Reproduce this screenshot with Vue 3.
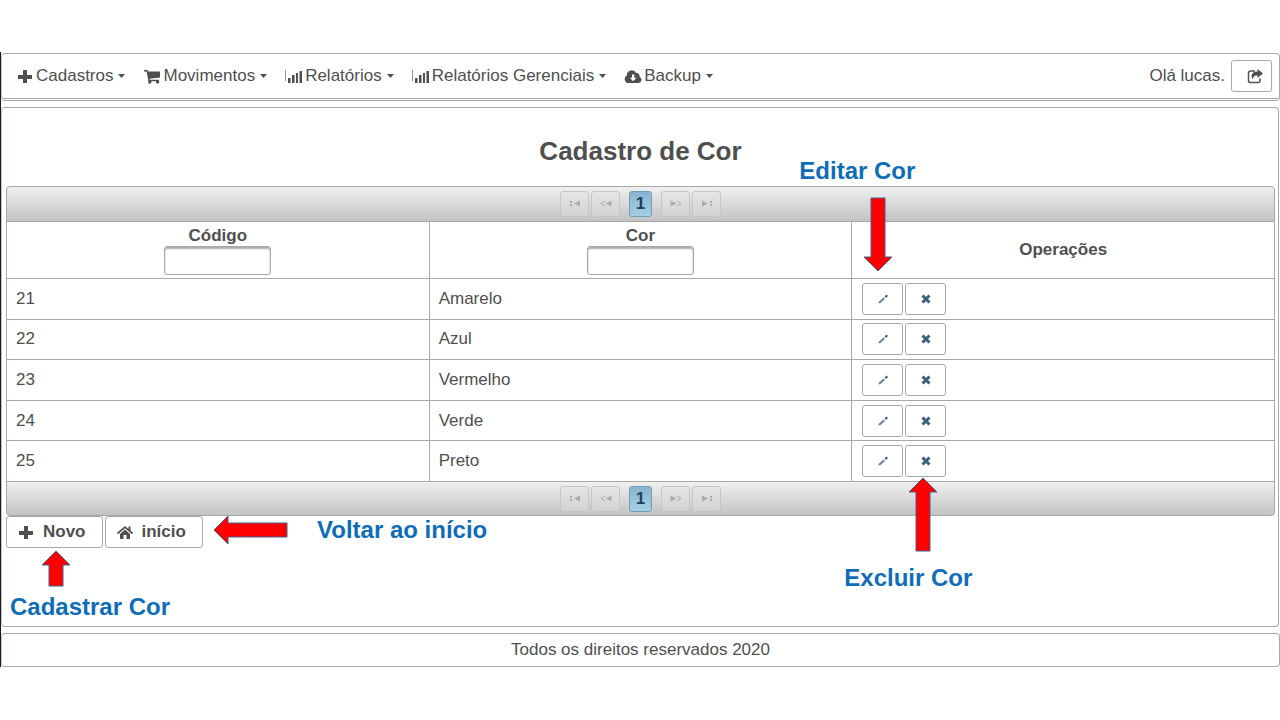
<script setup>
import { ref } from 'vue'

const menus = [
  { label: 'Cadastros', icon: 'plus' },
  { label: 'Movimentos', icon: 'cart' },
  { label: 'Relatórios', icon: 'chart' },
  { label: 'Relatórios Gerenciais', icon: 'chart' },
  { label: 'Backup', icon: 'cloud' },
]

const rows = [
  { code: 21, name: 'Amarelo' },
  { code: 22, name: 'Azul' },
  { code: 23, name: 'Vermelho' },
  { code: 24, name: 'Verde' },
  { code: 25, name: 'Preto' },
]

const pagers = ['top', 'bottom']
const codeFilter = ref('')
const nameFilter = ref('')
</script>

<template>
  <div class="page">
    <header class="menubar">
      <nav class="menu">
        <a v-for="m in menus" :key="m.label" href="#" class="menu-item">
          <svg v-if="m.icon === 'plus'" class="icon" viewBox="0 0 18 16">
            <path d="M7 2h4v5h5v4h-5v4H7v-4H2V7h5z" />
          </svg>
          <svg v-else-if="m.icon === 'cart'" class="icon" viewBox="0 0 18 16">
            <path d="M1 2h3.600l.5 1.600H17v6L6.600 10.800l.2.900H16v1.500H5.400L3.600 3.400H1z" />
            <circle cx="6.800" cy="14" r="1.700" /><circle cx="14.600" cy="14" r="1.700" />
          </svg>
          <svg v-else-if="m.icon === 'chart'" class="icon" viewBox="0 0 18 16">
            <path d="M0 2h1v11H0z" opacity=".6" />
            <path d="M3 10h2.500v5H3zM7 7h2.500v8H7zM11 9h2v6h-2zM11 5h2v5h-2zM14.500 3H17v12h-2.500z" />
          </svg>
          <svg v-else class="icon" viewBox="0 0 18 16">
            <path fill-rule="evenodd" d="M5 15a4 4 0 0 1-2.200-7.500A5 5 0 0 1 12.200 5a3 3 0 0 1 3.300 3.700A3.300 3.300 0 0 1 14.500 15zM8 6.500v3.200H5.800L9.200 13.200l3.300-3.500h-2.200V6.500z" />
          </svg>
          <span>{{ m.label }}</span>
          <svg class="caret" viewBox="0 0 7 4"><path d="M0 0h7L3.500 4z" /></svg>
        </a>
      </nav>
      <div class="user">
        <span>Olá lucas.</span>
        <button class="btn exit" type="button" aria-label="Sair">
          <svg class="share" viewBox="0 0 16 16">
            <path d="M8 3H3.500A2 2 0 0 0 1.500 5v7.500a2 2 0 0 0 2 2H11a2 2 0 0 0 2-2V10.500" fill="none" stroke="currentColor" stroke-width="1.500" />
            <path d="M10.500 1L16 5.500 10.500 10V7.500C7.500 7.300 6 8.500 5.800 11.500 3 7 5.500 3.500 10.500 3.500z" />
          </svg>
        </button>
      </div>
    </header>

    <main class="panel">
      <h1>Cadastro de Cor</h1>
      <div class="grid">
        <template v-for="pos in pagers" :key="pos">
          <div class="pager" :class="pos">
            <button class="page-btn" type="button" disabled aria-label="Primeira">
              <svg viewBox="0 0 12 8"><path d="M1 1h2v2H1zM1 4h2v2H1zM11 .5v6L5 3.500z" /></svg>
            </button>
            <button class="page-btn" type="button" disabled aria-label="Anterior">
              <svg viewBox="0 0 12 8"><path d="M11.500 .5v6l-6-3z" /><path d="M5 1L1 3.500 5 6" fill="none" stroke="currentColor" /></svg>
            </button>
            <button class="page-btn current" type="button">1</button>
            <button class="page-btn" type="button" disabled aria-label="Próxima">
              <svg viewBox="0 0 12 8"><path d="M.5 .5v6l6-3z" /><path d="M7 1l4 2.500L7 6" fill="none" stroke="currentColor" /></svg>
            </button>
            <button class="page-btn" type="button" disabled aria-label="Última">
              <svg viewBox="0 0 12 8"><path d="M1 .5v6l6-3zM9 1h2v2H9zM9 4h2v2H9z" /></svg>
            </button>
          </div>
          <table v-if="pos === 'top'">
            <thead>
              <tr>
                <th>
                  <label for="f-code">Código</label>
                  <input id="f-code" v-model="codeFilter" type="text" />
                </th>
                <th>
                  <label for="f-name">Cor</label>
                  <input id="f-name" v-model="nameFilter" type="text" />
                </th>
                <th class="anchor">
                  Operações
                  <div class="note edit">
                    <span>Editar Cor</span>
                    <svg width="30" height="75" viewBox="0 0 30 75"><path d="M8 1h14v59h7L15 74 1 60h7z" /></svg>
                  </div>
                </th>
              </tr>
            </thead>
            <tbody>
              <tr v-for="(r, i) in rows" :key="r.code">
                <td>{{ r.code }}</td>
                <td>{{ r.name }}</td>
                <td class="anchor">
                  <div class="ops">
                    <button class="btn op" type="button" aria-label="Editar">
                      <svg viewBox="0 0 12 12"><path d="M1.500 10.500l.5-2 4.500-4 1.500 1.500-4.500 4z" opacity=".75" /><path d="M7.500 3.500L9.500 1.500 11 3 9 5z" /></svg>
                    </button>
                    <button class="btn op" type="button" aria-label="Excluir">
                      <svg viewBox="0 0 12 12"><path d="M2.500 2.500l7 7M9.500 2.500l-7 7" stroke="currentColor" stroke-width="3" /></svg>
                    </button>
                  </div>
                  <div v-if="i === rows.length - 1" class="note remove">
                    <svg width="30" height="75" viewBox="0 0 30 75"><path d="M8 74h14V15h7L15 1 1 15h7z" /></svg>
                    <span>Excluir Cor</span>
                  </div>
                </td>
              </tr>
            </tbody>
          </table>
        </template>
      </div>

      <div class="actions">
        <button class="btn action" type="button">
          <svg class="icon" viewBox="0 0 18 16"><path d="M7 2h4v5h5v4h-5v4H7v-4H2V7h5z" /></svg>
          Novo
        </button>
        <button class="btn action" type="button">
          <svg class="icon" viewBox="0 0 18 16">
            <path d="M9 5.500l5 4.500v5h-3.500v-4h-3v4H4v-5z" />
            <path d="M1.500 9.500L9 3l7.500 6.500" fill="none" stroke="currentColor" stroke-width="1.700" />
            <path d="M12.500 2.500h2v5l-2-1.800z" />
          </svg>
          início
        </button>
        <div class="note create">
          <svg width="30" height="37" viewBox="0 0 30 37"><path d="M8 36h14V15h7L15 1 1 15h7z" /></svg>
          <span>Cadastrar Cor</span>
        </div>
        <div class="note back">
          <svg width="75" height="30" viewBox="0 0 75 30"><path d="M74 8v14H15v7L1 15 15 1v7z" /></svg>
          <span>Voltar ao início</span>
        </div>
      </div>
    </main>

    <footer class="footer">Todos os direitos reservados 2020</footer>
  </div>
</template>

<style>
body {
  background: #fff;
}
</style>

<style scoped>
.page {
  box-sizing: border-box;
  margin-top: 52px;
  padding-top: 1px;
  border-left: 1px solid #1d1820;
  font-family: "Liberation Sans", Arial, sans-serif;
  font-size: 17px;
  line-height: 20px;
  color: #4f4f4f;
}
.page * {
  box-sizing: border-box;
}
svg {
  display: block;
  fill: currentColor;
}
.menubar {
  display: flex;
  align-items: center;
  justify-content: space-between;
  height: 48px;
  padding: 0 7px 0 14px;
  border: 1px solid #a8a8a8;
  border-left-color: #c4c4c4;
  border-bottom: 3px double #a8a8a8;
  border-radius: 4px;
}
.menu {
  display: flex;
  gap: 18px;
}
.menu-item {
  display: flex;
  align-items: center;
  color: inherit;
  text-decoration: none;
  white-space: nowrap;
}
.icon {
  width: 18px;
  height: 16px;
  margin-right: 2px;
}
.caret {
  width: 7px;
  height: 4px;
  margin-left: 5px;
}
.user {
  display: flex;
  align-items: center;
  gap: 6px;
}
.btn {
  display: flex;
  align-items: center;
  justify-content: center;
  height: 32px;
  padding: 0;
  border: 1px solid #a8a8a8;
  border-radius: 3px;
  background: #fff;
  font: inherit;
  color: inherit;
}
.exit {
  width: 41px;
  padding-left: 6px;
}
.share {
  width: 16px;
  height: 16px;
}
.panel {
  margin: 6px 1px 0 0;
  padding: 0 3px 78px 4px;
  border: 1px solid #a8a8a8;
  border-left-color: #c4c4c4;
  border-radius: 4px;
}
h1 {
  margin: 0;
  padding: 28px 0 20px;
  font-size: 26px;
  line-height: 30px;
  text-align: center;
}
.grid {
  display: flex;
  flex-direction: column;
}
.pager {
  display: flex;
  align-items: center;
  justify-content: center;
  gap: 2px;
  height: 36px;
  border: 1px solid #a8a8a8;
  background: linear-gradient(#f0f0f0, #c3c3c3);
}
.top {
  border-radius: 4px 4px 0 0;
}
.bottom {
  height: 35px;
  border-radius: 0 0 4px 4px;
}
.page-btn {
  display: flex;
  align-items: center;
  justify-content: center;
  width: 29px;
  height: 26px;
  padding: 0;
  border: 1px solid #c6c6c6;
  border-radius: 3px;
  background: linear-gradient(#e6e6e6, #d2d2d2);
  color: #a9adb1;
}
.page-btn svg {
  width: 12px;
  height: 8px;
}
.current {
  width: 23px;
  margin: 0 7px;
  border-color: #6f9fb8;
  background: linear-gradient(#87b5cf, #a6cfe4);
  font: bold 17px/20px "Liberation Sans", Arial, sans-serif;
  color: #1c4257;
}
table {
  width: 100%;
  height: 261px;
  margin: -1px 0;
  border-collapse: collapse;
  table-layout: fixed;
}
th,
td {
  height: 40px;
  padding: 0 9px;
  border: 1px solid #a8a8a8;
  text-align: left;
}
td.anchor {
  padding-left: 10px;
}
th {
  height: 57px;
  text-align: center;
}
label {
  display: block;
}
input {
  display: block;
  width: 107px;
  height: 29px;
  margin: 0 auto;
  padding: 0 6px;
  border: 1px solid #a8a8a8;
  border-radius: 3px;
  box-shadow: inset 0 2px 2px #aaa;
  font: inherit;
}
.anchor {
  position: relative;
}
.ops {
  display: flex;
  gap: 2px;
}
.op {
  width: 41px;
  color: #3b5f75;
}
.op svg {
  width: 12px;
  height: 12px;
}
.actions {
  position: relative;
  display: flex;
  gap: 2px;
}
.action {
  padding: 0 16px 0 10px;
  font-weight: bold;
}
.action .icon {
  margin-right: 8px;
}
.note {
  position: absolute;
  font-size: 24px;
  font-weight: bold;
  line-height: 28px;
  color: #0f6db8;
  white-space: nowrap;
}
.note svg {
  fill: #f00;
  stroke: #41618c;
}
.edit {
  top: -65px;
  left: -53px;
}
.edit svg {
  margin: 12px 0 0 64px;
}
.remove {
  top: 36px;
  left: -8px;
}
.remove svg {
  margin: 0 0 12px 64px;
}
.create {
  top: 34px;
  left: 4px;
}
.create svg {
  margin: 0 0 6px 31px;
}
.back {
  display: flex;
  align-items: center;
  gap: 29px;
  top: -1px;
  left: 207px;
}
.footer {
  margin-top: 6px;
  padding: 6px 0;
  border: 1px solid #a8a8a8;
  border-left-color: #c4c4c4;
  border-radius: 4px;
  text-align: center;
}
</style>
